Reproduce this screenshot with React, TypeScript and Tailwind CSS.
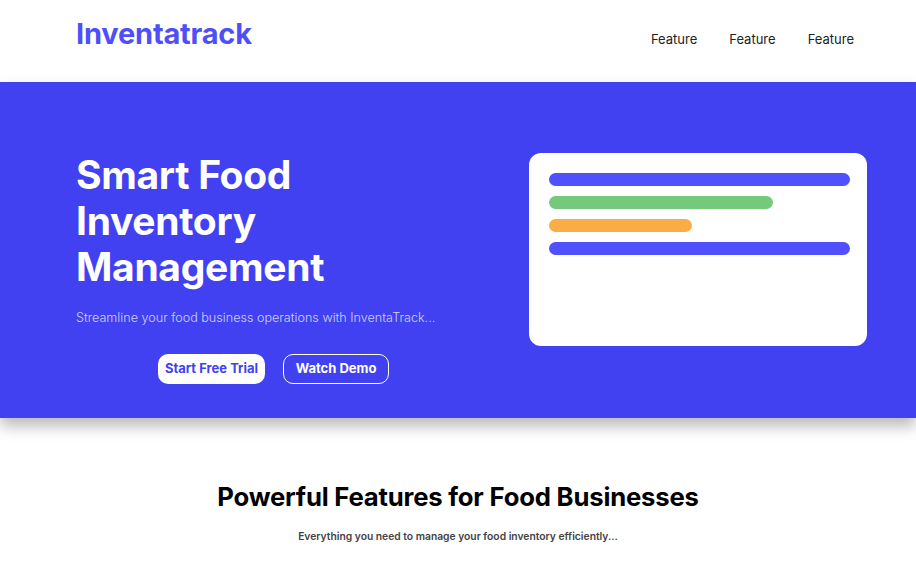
export default function App() {
  return (
    <div className="min-h-screen bg-white font-['Inter',sans-serif]">
      {/* Header */}
      <header className="flex h-[82px] items-start justify-between pl-[76px] pr-[62px]">
        <div className="mt-[16px] text-[29px] font-bold leading-[36px] tracking-[-0.2px] text-[#4f4ffa]">
          Inventatrack
        </div>
        <nav className="mt-[30px] flex gap-[32px] text-[13px] leading-[18px] text-[#222]">
          <a>Feature</a>
          <a>Feature</a>
          <a>Feature</a>
        </nav>
      </header>

      {/* Hero */}
      <section className="relative z-10 flex h-[336px] bg-[#4141f2] pl-[76px] pt-[70px] shadow-[0_8px_14px_rgba(0,0,0,0.28)]">
        <div className="w-[395px]">
          <h1 className="text-[39px] font-bold leading-[46px] tracking-[-0.3px] text-white">
            Smart Food
            <br />
            Inventory
            <br />
            Management
          </h1>
          <p className="mt-[19px] text-[12.6px] font-light text-white/75">
            Streamline your food business operations with InventaTrack...
          </p>
          <div className="mt-[26px] flex justify-center gap-[18px]">
            <button className="h-[30px] w-[107px] rounded-[10px] bg-white text-[13px] font-bold text-[#4141f2]">
              Start Free Trial
            </button>
            <button className="h-[30px] w-[106px] rounded-[10px] border border-white text-[13px] font-bold text-white">
              Watch Demo
            </button>
          </div>
        </div>
        <div className="ml-[58px] mt-[1px] h-[193px] w-[338px] rounded-[12px] bg-white pl-[20px] pr-[17px] pt-[20px]">
          <div className="flex flex-col gap-[10px]">
            <div className="h-[13px] w-full rounded-full bg-[#5050ff]" />
            <div className="h-[13px] w-[224px] rounded-full bg-[#74c97a]" />
            <div className="h-[13px] w-[143px] rounded-full bg-[#faac45]" />
            <div className="h-[13px] w-full rounded-full bg-[#5050ff]" />
          </div>
        </div>
      </section>

      {/* Features */}
      <section className="pt-[60px] text-center">
        <h2 className="text-[25.7px] font-bold tracking-[-0.2px] text-black">
          Powerful Features for Food Businesses
        </h2>
        <p className="mt-[12px] text-[10.3px] font-semibold text-[#444]">
          Everything you need to manage your food inventory efficiently...
        </p>
      </section>
    </div>
  );
}
